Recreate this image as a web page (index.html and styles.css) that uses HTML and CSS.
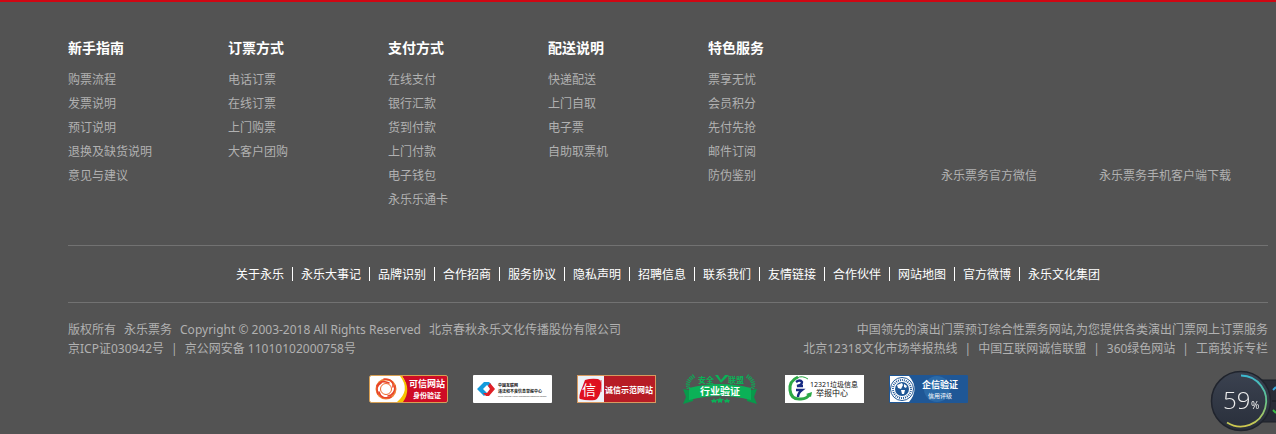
FILE: index.html
```html
<!DOCTYPE html>
<html lang="zh-CN">
<head>
<meta charset="utf-8">
<title>永乐票务</title>
<link rel="stylesheet" href="styles.css">
</head>
<body>
<footer class="footer">
  <div class="guide">
    <section class="guide-col">
      <h2>新手指南</h2>
      <ul>
        <li><a href="#">购票流程</a></li>
        <li><a href="#">发票说明</a></li>
        <li><a href="#">预订说明</a></li>
        <li><a href="#">退换及缺货说明</a></li>
        <li><a href="#">意见与建议</a></li>
      </ul>
    </section>
    <section class="guide-col">
      <h2>订票方式</h2>
      <ul>
        <li><a href="#">电话订票</a></li>
        <li><a href="#">在线订票</a></li>
        <li><a href="#">上门购票</a></li>
        <li><a href="#">大客户团购</a></li>
      </ul>
    </section>
    <section class="guide-col">
      <h2>支付方式</h2>
      <ul>
        <li><a href="#">在线支付</a></li>
        <li><a href="#">银行汇款</a></li>
        <li><a href="#">货到付款</a></li>
        <li><a href="#">上门付款</a></li>
        <li><a href="#">电子钱包</a></li>
        <li><a href="#">永乐乐通卡</a></li>
      </ul>
    </section>
    <section class="guide-col">
      <h2>配送说明</h2>
      <ul>
        <li><a href="#">快递配送</a></li>
        <li><a href="#">上门自取</a></li>
        <li><a href="#">电子票</a></li>
        <li><a href="#">自助取票机</a></li>
      </ul>
    </section>
    <section class="guide-col">
      <h2>特色服务</h2>
      <ul>
        <li><a href="#">票享无忧</a></li>
        <li><a href="#">会员积分</a></li>
        <li><a href="#">先付先抢</a></li>
        <li><a href="#">邮件订阅</a></li>
        <li><a href="#">防伪鉴别</a></li>
      </ul>
    </section>
    <div class="codes">
      <p>永乐票务官方微信</p>
      <p>永乐票务手机客户端下载</p>
    </div>
  </div>

  <nav class="site-nav">
    <a href="#">关于永乐</a>
    <a href="#">永乐大事记</a>
    <a href="#">品牌识别</a>
    <a href="#">合作招商</a>
    <a href="#">服务协议</a>
    <a href="#">隐私声明</a>
    <a href="#">招聘信息</a>
    <a href="#">联系我们</a>
    <a href="#">友情链接</a>
    <a href="#">合作伙伴</a>
    <a href="#">网站地图</a>
    <a href="#">官方微博</a>
    <a href="#">永乐文化集团</a>
  </nav>

  <div class="legal">
    <div>
      <p class="phrases"><span>版权所有</span><span>永乐票务</span><span>Copyright © 2003-2018 All Rights Reserved</span><span>北京春秋永乐文化传播股份有限公司</span></p>
      <p class="phrases piped"><a href="#">京ICP证030942号</a><span>|</span><span>京公网安备 11010102000758号</span></p>
    </div>
    <div class="legal-right">
      <p>中国领先的演出门票预订综合性票务网站,为您提供各类演出门票网上订票服务</p>
      <p class="phrases piped"><a href="#">北京12318文化市场举报热线</a><span>|</span><a href="#">中国互联网诚信联盟</a><span>|</span><a href="#">360绿色网站</a><span>|</span><a href="#">工商投诉专栏</a></p>
    </div>
  </div>

  <div class="badges">
    <a href="#" aria-label="可信网站身份验证">
      <svg viewBox="0 0 79 28">
        <rect x=".5" y=".5" width="78" height="27" rx="2" fill="#fff" stroke="#d9a052"/>
        <path d="M33 1H77Q78 1 78 2V26Q78 27 77 27H32Q42 14 33 1Z" fill="#cf0c25"/>
        <path d="M31 1H33Q43 14 34 27H28Q42 15 31 1Z" fill="#f6c400"/>
        <g fill="none" stroke-linecap="round">
          <circle cx="17" cy="14" r="9.5" stroke="#f0883a" stroke-width="2"/>
          <g stroke="#e8442a" stroke-width="1.6"><path d="M8 11Q12 4 20 8"/><path d="M15 4Q25 4 24 12"/><path d="M26 11Q26 20 19 21"/><path d="M22 22Q12 25 10 17"/><path d="M9 19Q6 11 12 8"/></g>
        </g>
        <circle cx="17" cy="14" r="5.5" fill="#fff" stroke="#ef6a2c"/>
        <text x="58" y="12" class="badge-text bold" fill="#fff" font-size="9">可信网站</text>
        <text x="58" y="23" class="badge-text bold" fill="#fff" font-size="7">身份验证</text>
      </svg>
    </a>
    <a href="#" aria-label="中国互联网违法和不良信息举报中心">
      <svg viewBox="0 0 79 28">
        <rect width="79" height="28" rx="1" fill="#fff"/>
        <path d="M16 7H11L4 14 11 21 14 18 10 14 14 10 17 13 18 12V9Z" fill="#149bdc"/>
        <path d="M17 8 22 14 16 21H13L10 18 14 18 17 14 15 11Z" fill="#e01f26"/>
        <text x="25" y="12" class="bold" fill="#111" font-size="4">中国互联网</text>
        <text x="25" y="18" class="bold" fill="#111" font-size="4">违法和不良信息举报中心</text>
        <text x="25" y="22" fill="#333" font-size="2">China Internet Illegal Information Reporting Centre</text>
      </svg>
    </a>
    <a href="#" aria-label="诚信示范网站">
      <svg viewBox="0 0 79 28">
        <rect x=".5" y=".5" width="78" height="27" fill="#b71c25" stroke="#d79a60"/>
        <rect x="1" y="1" width="26" height="26" fill="#eef2f8"/>
        <path d="M8 5Q14 3 21 4Q25 5 24 13Q23 23 18 25Q10 26 3 24Q1 22 5 13Z" fill="#df1020"/>
        <text x="12" y="20" class="badge-text" fill="#fff" font-size="14">信</text>
        <path d="M21 5V17M24 5V17M21 8H24M21 12H24" stroke="#df1020" stroke-width=".8"/>
        <text x="52" y="18" class="badge-text bold" fill="#fff" font-size="8">诚信示范网站</text>
      </svg>
    </a>
    <a href="#" aria-label="安全联盟行业验证">
      <svg viewBox="0 0 79 28">
        <g fill="#0bb157">
          <path d="M2 14 12 16V26L2 29 5 22ZM76 14 66 16V26L76 29 73 22Z" fill="#07994b"/>
          <path d="M8 13Q39 5 70 13V25Q39 17 8 25Z"/>
          <path d="m33 23 1 2h2l-1 2v1l-2-1-2 1v-1l-1-2h2ZM39 22l1 2h3l-2 2v2l-2-1-2 1v-2l-2-2h3ZM46 23l1 2h2l-1 2v1l-2-1-2 1v-1l-1-2h2Z"/>
          <path d="M34 0H37L40 5 44 0H48L40 8Z"/>
          <text x="25" y="8" class="badge-text bold" font-size="8">安全</text>
          <text x="55" y="8" class="badge-text bold" font-size="8">联盟</text>
        </g>
        <path d="M13 1Q4 7 8 14M66 1Q75 7 71 14" fill="none" stroke="#0bb157" stroke-width="4" stroke-dasharray="1 1"/>
        <text x="39" y="20" class="badge-text bold" fill="#fff" font-size="10">行业验证</text>
      </svg>
    </a>
    <a href="#" aria-label="12321垃圾信息举报中心">
      <svg viewBox="0 0 79 28">
        <rect width="79" height="28" fill="#fff"/>
        <g fill="none" stroke="#2ca846">
          <path d="M13 2Q4 6 5 15Q6 25 16 24Q22 24 25 19" stroke-width="3"/>
          <path d="M12 3Q17 0 23 4" stroke-width="1"/>
        </g>
        <path d="m21 19 6-2-1 5Z" fill="#2ca846"/>
        <path d="M11 7Q15 4 17 7Q17 10 12 11H18M11 15H17Q13 18 13 22" fill="none" stroke="#172b83" stroke-width="2.4"/>
        <text x="49" y="12" class="badge-text" fill="#111" font-size="7">12321垃圾信息</text>
        <text x="47" y="21" class="badge-text" fill="#111" font-size="8">举报中心</text>
      </svg>
    </a>
    <a href="#" aria-label="企信验证信用评级">
      <svg viewBox="0 0 79 28">
        <rect width="79" height="28" rx="1" fill="#1f5796"/>
        <circle cx="48" cy="14" r="13" fill="#2b6aa8"/>
        <path d="M1 1H20Q31 14 20 27H1Z" fill="#fff"/>
        <g fill="none" stroke="#1f5796">
          <circle cx="13" cy="14" r="11.5"/>
          <circle cx="13" cy="14" r="9" stroke-width="2" stroke-dasharray="1 1"/>
        </g>
        <circle cx="13" cy="14" r="7" fill="#1f5796"/>
        <path d="m8 10 5-2 1 2-2 4-3-1ZM15 9l3 2-1 2-2-1ZM12 15l4 0-1 4-2 0Z" fill="#fff"/>
        <text x="51" y="13" class="badge-text bold" fill="#fff" font-size="9">企信验证</text>
        <text x="51" y="23" class="badge-text" fill="#fff" font-size="6">信用评级</text>
      </svg>
    </a>
  </div>
</footer>

<aside class="monitor" aria-label="59%">
  <svg viewBox="0 0 66 64">
    <defs>
      <linearGradient id="face" x1="0" y1="0" x2="0" y2="1"><stop offset="0" stop-color="#3b4250"/><stop offset="1" stop-color="#292f3b"/></linearGradient>
      <linearGradient id="arc" x1="0" y1="0" x2="0" y2="1"><stop offset="0" stop-color="#3cb8d0"/><stop offset=".5" stop-color="#66c58a"/><stop offset="1" stop-color="#cfc74e"/></linearGradient>
    </defs>
    <rect x="40" y="10" width="30" height="42" rx="3" fill="#282c36" stroke="#1d2028"/>
    <path d="M62 31H66" stroke="#15181e"/>
    <path d="m63 20 3-3" stroke="#35a7dc" stroke-width="2"/>
    <path d="m63 40 3 3" stroke="#3cbc46" stroke-width="2"/>
    <circle cx="31" cy="31" r="29.5" fill="url(#face)" stroke="#20242d" stroke-width="1.5"/>
    <path d="M31 5.500A25.500 25.500 0 1 1 17 52.500" fill="none" stroke="url(#arc)" stroke-width="1.8"/>
    <text x="13" y="39" class="monitor-number">59</text>
    <text x="41" y="39" class="monitor-unit">%</text>
  </svg>
</aside>
</body>
</html>
```
FILE: styles.css
```css
* {
  box-sizing: border-box;
}

body {
  margin: 0;
  background: #535353;
  color: #b1b1b1;
  font: 12px/24px "Noto Sans", "Noto Sans CJK SC", sans-serif;
}

h2,
p,
ul {
  margin: 0;
  padding: 0;
  list-style: none;
}

a {
  color: inherit;
  text-decoration: none;
}

.footer {
  border-top: 2px solid #d00713;
  padding: 34px 8px 28px 68px;
}

.guide {
  display: flex;
  padding-bottom: 33px;
}

.guide-col {
  flex: 0 0 160px;
}

.guide-col h2 {
  margin-bottom: 8px;
  color: #fff;
  font-size: 14px;
  font-weight: bold;
  line-height: 24px;
}

.codes {
  flex: 1;
  display: flex;
  justify-content: flex-end;
  align-items: flex-start;
  gap: 62px;
  padding: 128px 37px 0 0;
  white-space: nowrap;
}

.site-nav {
  display: flex;
  flex-wrap: wrap;
  justify-content: center;
  padding: 21px 0;
  border: 1px solid #727272;
  border-width: 1px 0;
  color: #fff;
  line-height: 12px;
}

.site-nav a {
  padding: 2px 8px 0;
}

.site-nav a + a {
  border-left: 1px solid #fff;
}

.legal {
  display: flex;
  justify-content: space-between;
  padding: 17px 0;
  line-height: 19px;
}

.legal-right {
  text-align: right;
}

.phrases {
  display: flex;
  gap: 8px;
}

.piped {
  gap: 7px;
}

.legal-right .phrases {
  justify-content: flex-end;
}

.badges {
  display: flex;
  justify-content: center;
  gap: 25px;
}

.badges svg {
  display: block;
  width: 79px;
  height: 28px;
  overflow: visible;
}

.badge-text {
  text-anchor: middle;
}

.bold {
  font-weight: bold;
}

.monitor {
  position: fixed;
  right: 0;
  bottom: 0;
  width: 66px;
  height: 64px;
}

.monitor svg {
  display: block;
}

.monitor-number {
  fill: #eee;
  font-family: "Open Sans", sans-serif;
  font-size: 24px;
  font-weight: 300;
}

.monitor-unit {
  fill: #eee;
  font-size: 10px;
}
```
